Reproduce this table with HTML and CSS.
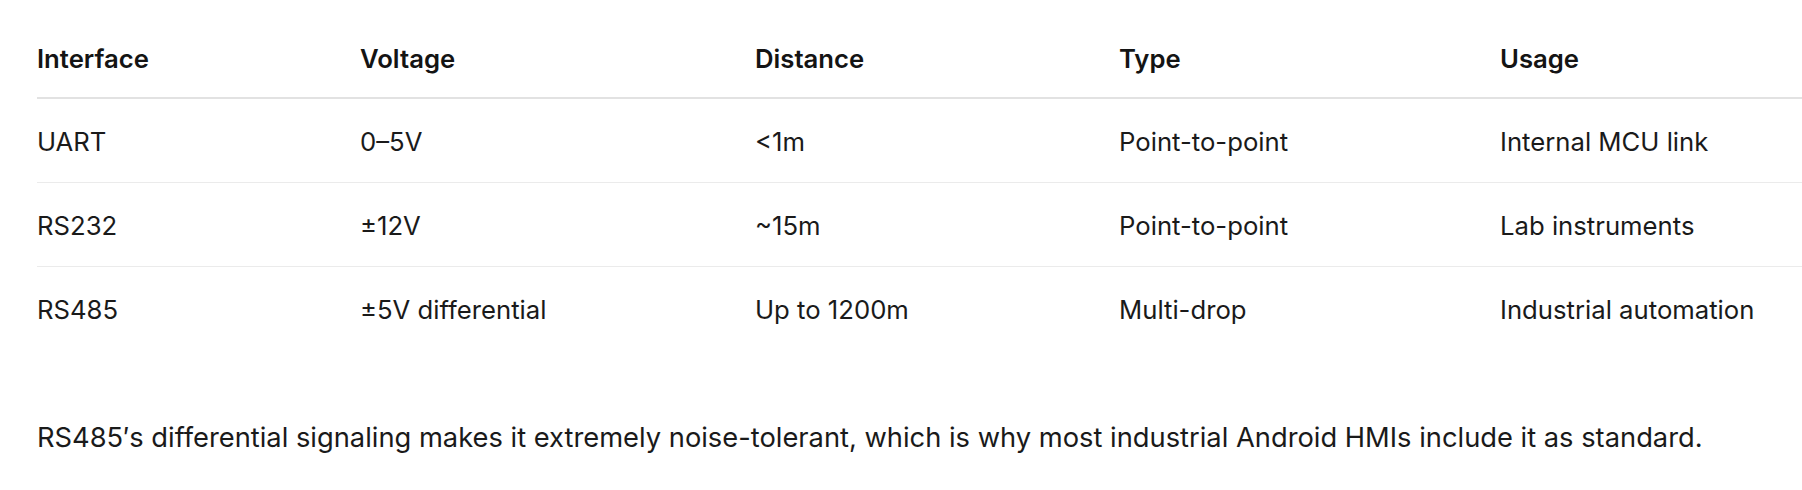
FILE: index.html
```html
<!DOCTYPE html>
<html lang="en">
<head>
<meta charset="utf-8">
<title>Serial interfaces</title>
<link rel="stylesheet" href="styles.css">
</head>
<body>
<main class="content">
  <table class="spec">
    <colgroup>
      <col class="c1"><col class="c2"><col class="c3"><col class="c4"><col class="c5">
    </colgroup>
    <thead>
      <tr><th>Interface</th><th>Voltage</th><th>Distance</th><th>Type</th><th>Usage</th></tr>
    </thead>
    <tbody>
      <tr><td>UART</td><td>0–5V</td><td>&lt;1m</td><td>Point-to-point</td><td>Internal MCU link</td></tr>
      <tr><td>RS232</td><td>±12V</td><td>~15m</td><td>Point-to-point</td><td>Lab instruments</td></tr>
      <tr><td>RS485</td><td>±5V differential</td><td>Up to 1200m</td><td>Multi-drop</td><td>Industrial automation</td></tr>
    </tbody>
  </table>
  <p class="note">RS485′s differential signaling makes it extremely noise-tolerant, which is why most industrial Android HMIs include it as standard.</p>
</main>
</body>
</html>
```
FILE: styles.css
```css
html, body {
  margin: 0;
  padding: 0;
  background: #ffffff;
}
body {
  font-family: Inter, "Noto Sans", sans-serif;
  color: #1a1a1a;
}
.content {
  padding: 17px 0 0 37px;
}
.spec {
  width: 1765px;
  border-collapse: collapse;
  table-layout: fixed;
  font-size: 25.7px;
  line-height: 38px;
}
.c1 { width: 323px; }
.c2 { width: 395px; }
.c3 { width: 364px; }
.c4 { width: 381px; }
.c5 { width: 302px; }
.spec th {
  text-align: left;
  font-weight: 600;
  color: #141414;
  padding: 23px 0 19px 0;
  border-bottom: 2px solid #e2e2e2;
}
.spec td {
  padding: 24px 0 21px 0;
  border-bottom: 1px solid #ebebeb;
}
.spec tbody tr:last-child td {
  border-bottom: none;
}
.note {
  margin: 68px 0 0 0;
  font-size: 27.3px;
  line-height: 40px;
}
```
